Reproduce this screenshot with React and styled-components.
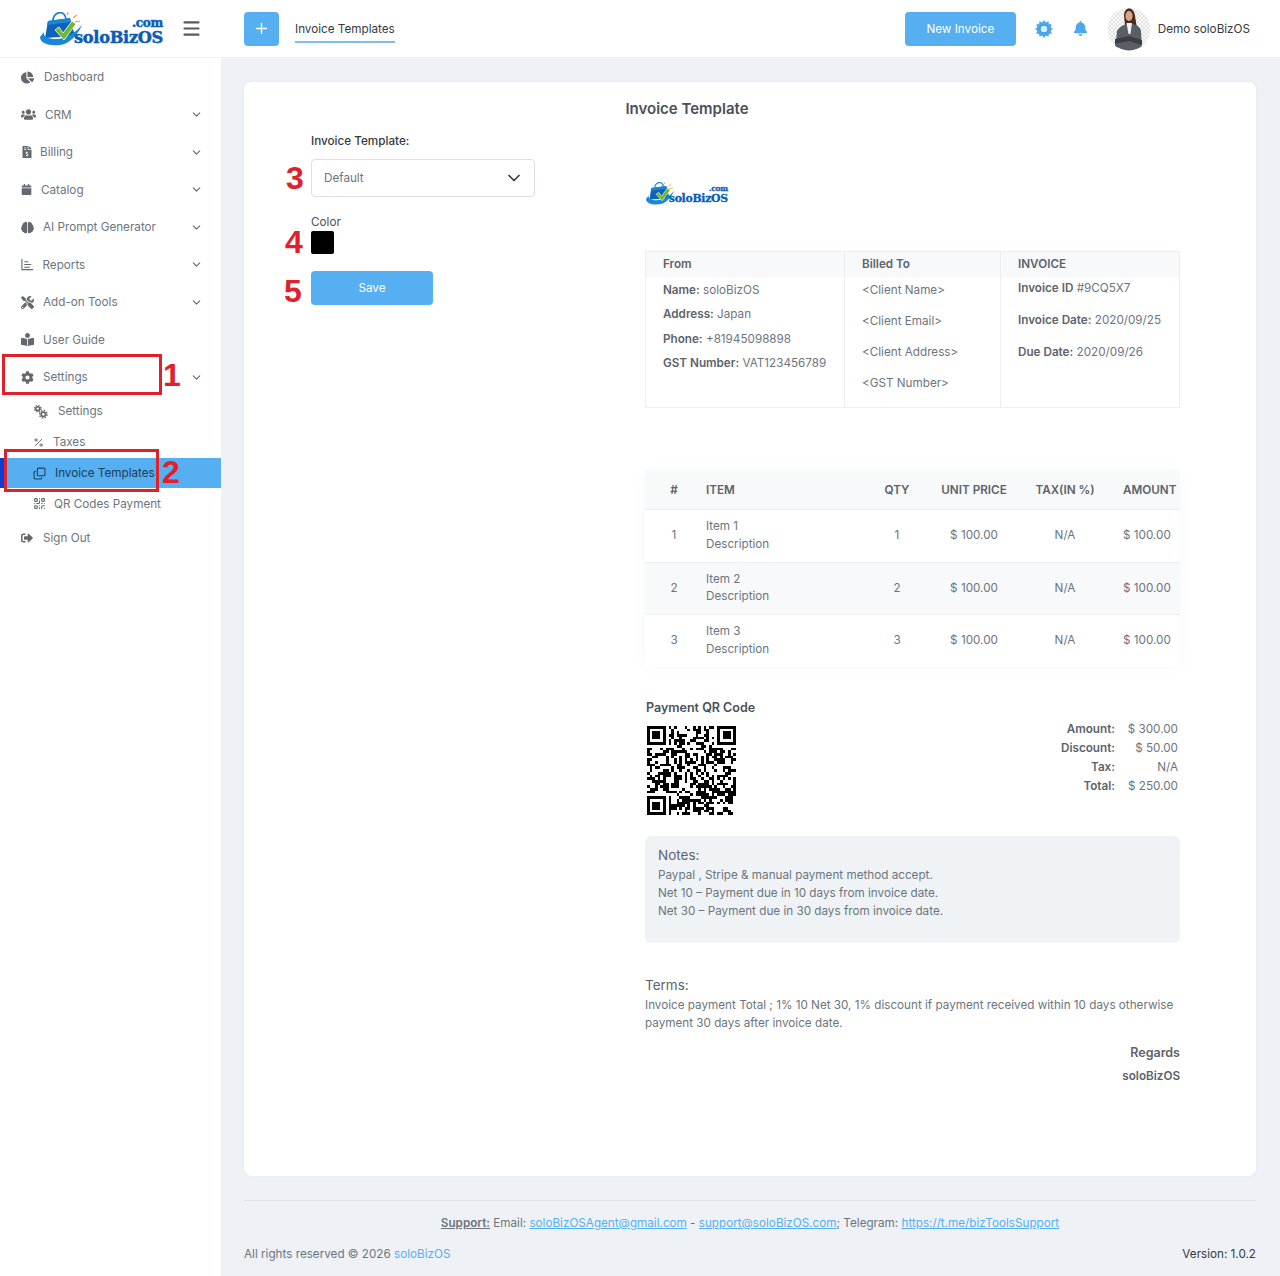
import styled, { createGlobalStyle } from "styled-components";
import { ChevronDown, Menu, Plus } from "lucide-react";
import {
  FaBell, FaBookReader, FaBrain, FaCalendar, FaChartPie, FaCog, FaFileInvoiceDollar,
  FaSignOutAlt, FaTools, FaUsers,
} from "react-icons/fa";
import { LuCopy, LuPercent, LuQrCode } from "react-icons/lu";

const GlobalStyle = createGlobalStyle`
  html, body { margin: 0; padding: 0; }
  body {
    background: #eef2f6;
    font-family: Inter, "Noto Sans", "Liberation Sans", sans-serif;
    font-size: 11.7px;
    color: #6c757d;
  }
  * { box-sizing: border-box; }
`;

const Page = styled.div`
  position: relative;
  width: 1280px;
  height: 1276px;
  overflow: hidden;
  display: grid;
  grid-template-columns: 221px 1fr;
  grid-template-rows: 58px 1fr;
`;

/* ---------- header ---------- */
const Brand = styled.div`
  background: #fff;
  display: flex;
  align-items: center;
  padding-left: 40px;
  border-bottom: 1px solid #eef0f3;
`;

const LogoWrap = styled.div`
  display: flex;
  align-items: center;
  flex-shrink: 0;
`;

const LogoText = styled.div`
  display: flex;
  flex-direction: column;
  align-items: flex-end;
  font-family: "DejaVu Serif", "Liberation Serif", serif;
  font-weight: 700;
  color: #0c5cb4;
  -webkit-text-stroke: ${(p) => (p.$small ? "0.3px" : "0.5px")} #0c5cb4;
  font-size: ${(p) => (p.$small ? "10.9px" : "16.2px")};
  line-height: ${(p) => (p.$small ? "11px" : "15px")};
  letter-spacing: -0.3px;
  margin-left: ${(p) => (p.$small ? "-9.5px" : "-14px")};
  padding-top: ${(p) => (p.$small ? "2px" : "5px")};
`;

const LogoCom = styled.span`
  font-size: ${(p) => (p.$small ? "7.5px" : "12px")};
  line-height: ${(p) => (p.$small ? "8px" : "13px")};
`;

const Burger = styled.span`
  display: inline-flex;
  color: #555b61;
  margin-left: 18px;
`;

const TopBar = styled.header`
  background: #fff;
  display: flex;
  align-items: center;
  padding: 0 30px 0 23px;
  border-bottom: 1px solid #eef0f3;
`;

const PlusButton = styled.button`
  width: 35px;
  height: 34px;
  border: 0;
  border-radius: 4px;
  background: #55aff0;
  color: #fff;
  display: flex;
  align-items: center;
  justify-content: center;
  padding: 0;
`;

const Tab = styled.div`
  margin-left: 16px;
  padding: 7px 0 4px;
  color: #343a40;
  border-bottom: 2px solid #7dbde8;
  line-height: 15px;
`;

const TopRight = styled.div`
  margin-left: auto;
  display: flex;
  align-items: center;
`;

const PrimaryButton = styled.button`
  width: ${(p) => p.$width}px;
  height: 34px;
  border: 0;
  border-radius: 4px;
  background: #55aff0;
  color: #fff;
  font: inherit;
  padding: 0;
`;

const TopIcon = styled.span`
  display: inline-flex;
  color: #4ba8ec;
  margin-left: ${(p) => p.$left}px;
`;

const AvatarImage = styled.svg`
  margin-left: 19px;
`;

const UserName = styled.span`
  margin-left: 7px;
  color: #343a40;
`;

/* ---------- sidebar ---------- */
const Sidebar = styled.nav`
  background: #fff;
  display: flex;
  flex-direction: column;
  padding-top: 0.6px;
`;

const NavRow = styled.div`
  height: 37.5px;
  flex-shrink: 0;
  display: flex;
  align-items: center;
  padding: 0 18px 0 21px;
  color: #6c757d;
`;

const SubRow = styled.div`
  height: 30.8px;
  flex-shrink: 0;
  display: flex;
  align-items: center;
  padding-left: ${(p) => (p.$active ? "29px" : "33px")};
  color: ${(p) => (p.$active ? "#1c3d5a" : "#6c757d")};
  background: ${(p) => (p.$active ? "#55aff0" : "transparent")};
  border-left: ${(p) => (p.$active ? "4px solid #0b3fd0" : "0")};
`;

const IconSlot = styled.span`
  width: ${(p) => p.$slot}px;
  flex-shrink: 0;
  display: inline-flex;
  align-items: center;
  color: ${(p) => (p.$active ? "#1c3d5a" : "#62686e")};
`;

const Chevron = styled(ChevronDown)`
  margin-left: auto;
  color: #62686e;
`;

const RotatedCopy = styled(LuCopy)`
  transform: rotate(-90deg);
`;

/* ---------- main ---------- */
const Main = styled.main`
  padding: 24px 24px 0 23px;
  display: flex;
  flex-direction: column;
`;

const Card = styled.section`
  height: 1094px;
  background: #fff;
  border-radius: 8px;
  padding-top: 17px;
  box-shadow: 0 0 4px rgba(90, 110, 130, 0.06);
`;

const CardTitle = styled.h1`
  margin: 1px 0 -1px;
  width: 886px;
  text-align: center;
  font-size: 15px;
  line-height: 18px;
  font-weight: 600;
  color: #495057;
`;

const CardBody = styled.div`
  display: flex;
  padding-left: 67px;
`;

const FormColumn = styled.div`
  width: 224px;
  padding-top: 15px;
  flex-shrink: 0;
`;

const FieldLabel = styled.div`
  line-height: 18px;
  color: ${(p) => (p.$strong ? "#343a40" : "#495057")};
  font-weight: ${(p) => (p.$strong ? 500 : 400)};
`;

const SelectBox = styled.div`
  height: 38px;
  margin-top: 9px;
  border: 1px solid #dcdfe3;
  border-radius: 4px;
  display: flex;
  align-items: center;
  justify-content: space-between;
  padding: 0 10px 0 12px;
  color: #6c757d;
`;

const ColorGroup = styled.div`
  margin-top: 16px;
`;

const Swatch = styled.div`
  width: 23px;
  height: 23px;
  border-radius: 2px;
  background: #000;
`;

const SaveRow = styled.div`
  margin-top: 17px;
`;

const Preview = styled.div`
  width: 535px;
  margin-left: 110px;
  padding-top: 65px;
  flex-shrink: 0;
`;

const PreviewLogo = styled.div`
  padding-left: 1px;
  height: 69px;
`;

const InfoTable = styled.div`
  height: 157px;
  display: grid;
  grid-template-columns: 198px 156px 179px;
  border: 1px solid #eceef1;
`;

const InfoCol = styled.div`
  border-left: ${(p) => (p.$first ? "0" : "1px solid #eceef1")};
`;

const InfoHead = styled.div`
  height: 25px;
  background: #f8f9fa;
  padding: 0 0 1px 17px;
  display: flex;
  align-items: center;
  font-weight: 600;
  color: #5c636a;
`;

const InfoLines = styled.div`
  padding: ${(p) => p.$top}px 0 0 17px;
  display: flex;
  flex-direction: column;
  gap: ${(p) => p.$gap}px;
`;

const InfoLine = styled.div`
  line-height: 15px;
  white-space: nowrap;
  b { font-weight: 600; color: #5c636a; }
`;

const ItemsTable = styled.div`
  margin-top: 63px;
  box-shadow: 0 0 12px rgba(120, 135, 150, 0.07);
  border-radius: 6px;
`;

const ItemRow = styled.div`
  display: grid;
  grid-template-columns: 58px 170px 48px 106px 76px 77px;
  align-items: center;
  height: ${(p) => (p.$head ? 38 : 52.5)}px;
  padding-top: ${(p) => (p.$head ? 1 : 0)}px;
  background: ${(p) => (p.$shade ? "#f8f9fa" : "#fff")};
  border-top: ${(p) => (p.$line ? "1px solid #eceef1" : "0")};
  font-weight: ${(p) => (p.$head ? 600 : 400)};
  color: ${(p) => (p.$head ? "#5c636a" : "#6c757d")};
`;

const Cell = styled.div`
  text-align: ${(p) => p.$align || "center"};
  padding-left: ${(p) => p.$pad || 0}px;
  line-height: 17.5px;
  white-space: nowrap;
`;

const QrRow = styled.div`
  margin-top: 33px;
  display: flex;
  justify-content: space-between;
  padding-left: 1px;
`;

const QrTitle = styled.div`
  font-size: 12.5px;
  font-weight: 600;
  color: #495057;
  line-height: 16px;
`;

const QrImage = styled.svg`
  display: block;
  margin: 10px 0 0 1px;
`;

const Totals = styled.div`
  padding: 20px 2px 0 0;
  display: grid;
  grid-template-columns: auto 63px;
  grid-auto-rows: 19px;
  align-items: center;
  text-align: right;
  font-weight: 400;
  b { font-weight: 600; color: #5c636a; }
`;

const Notes = styled.div`
  margin-top: 21px;
  height: 107px;
  background: #eff3f6;
  border-radius: 6px;
  padding: 10px 13px;
  line-height: 18px;
`;

const NoteTitle = styled.div`
  font-size: 13.5px;
  line-height: 18px;
  color: #5c636a;
  margin-bottom: 2px;
`;

const Terms = styled.div`
  margin-top: 33px;
  line-height: 18px;
`;

const Regards = styled.div`
  margin-top: ${(p) => p.$top}px;
  text-align: right;
  font-size: ${(p) => (p.$big ? "12.5px" : "inherit")};
  font-weight: 600;
  color: #5c636a;
  line-height: 16px;
`;

const Footer = styled.footer`
  margin-top: 24px;
  border-top: 1px solid #dfe3e8;
`;

const Support = styled.div`
  text-align: center;
  padding-top: 14px;
  line-height: 16px;
  b { font-weight: 600; text-decoration: underline; }
`;

const Link = styled.span`
  color: #55aff0;
  text-decoration: ${(p) => (p.$plain ? "none" : "underline")};
`;

const FooterBottom = styled.div`
  display: flex;
  justify-content: space-between;
  margin-top: 15px;
  line-height: 16px;
`;

const Version = styled.span`
  color: #343a40;
`;

/* ---------- red annotations over the screenshot ---------- */
const MarkBox = styled.div`
  position: absolute;
  left: ${(p) => p.$x}px;
  top: ${(p) => p.$y}px;
  width: ${(p) => p.$w}px;
  height: ${(p) => p.$h}px;
  border: 3px solid #e0202a;
`;

const MarkNum = styled.span`
  position: absolute;
  left: ${(p) => p.$x}px;
  top: ${(p) => p.$y}px;
  font-family: "Liberation Sans", Arial, sans-serif;
  font-size: 32px;
  line-height: 32px;
  font-weight: 700;
  color: #e0202a;
`;

const LogoIcon = ({ small }) => (
  <svg width={small ? 32.3 : 48} height={small ? 23 : 34} viewBox="0 0 48 34">
    <path d="M8 9 L30 6 L35 24 L5 26Z" fill="#0e62b8" />
    <path d="M8 9 L30 6 L31 10 L7 13Z" fill="#1a86d8" />
    <path d="M13 10 C12 -1 26 -3 26 8" fill="none" stroke="#1a86d8" strokeWidth="1.8" />
    <path d="M0 25 C0 31 8 34 20 33 C30 32 38 22 42 13 C36 20 26 27 16 27 C8 27 3 25 4 20 Z" fill="#1a86d8" />
    <path d="M15 18 L19 15 L23 21 L32 9 L36 12 L24 28Z" fill="#6cbb2d" stroke="#fff" strokeWidth="0.8" />
    <path d="M27 3 L28 0 M33 6 L37 3 M35 10 L40 9" stroke="#f0a030" strokeWidth="1.2" />
  </svg>
);

const Logo = ({ small }) => (
  <LogoWrap>
    <LogoIcon small={small} />
    <LogoText $small={small}>
      <LogoCom $small={small}>.com</LogoCom>
      <span>soloBizOS</span>
    </LogoText>
  </LogoWrap>
);

const GearIcon = () => (
  <svg width="18" height="18" viewBox="0 0 18 18">
    <path
      fill="#4ba8ec"
      d="M9 0 L10.8 2.4 L13.5 1.2 L13.9 4.1 L16.8 4.5 L15.6 7.2 L18 9 L15.6 10.8 L16.8 13.5 L13.9 13.9 L13.5 16.8 L10.8 15.6 L9 18 L7.2 15.6 L4.5 16.8 L4.1 13.9 L1.2 13.5 L2.4 10.8 L0 9 L2.4 7.2 L1.2 4.5 L4.1 4.1 L4.5 1.2 L7.2 2.4Z"
    />
    <circle cx="9" cy="9" r="4" fill="#d8ecfb" stroke="#3f9be0" strokeWidth="1.4" />
  </svg>
);

const Avatar = () => (
  <AvatarImage width="44" height="44" viewBox="0 0 44 44">
    <defs>
      <pattern id="chk" width="4" height="4" patternUnits="userSpaceOnUse">
        <rect width="4" height="4" fill="#fafafa" />
        <rect width="2" height="2" fill="#e2e2e2" />
        <rect x="2" y="2" width="2" height="2" fill="#e2e2e2" />
      </pattern>
      <clipPath id="round"><circle cx="22" cy="22" r="21.5" /></clipPath>
    </defs>
    <g clipPath="url(#round)">
      <rect width="44" height="44" fill="url(#chk)" />
      <path d="M17 9 C17 -1 27 -1 28 9 L30 21 L26 24 L18 18Z" fill="#4a2c1e" />
      <ellipse cx="22" cy="9" rx="3.6" ry="5" fill="#d9a68a" />
      <path d="M8 44 L10 24 C13 19 17 18 20 17 L26 17 C30 18 33 20 34 24 L35 44Z" fill="#5a5e65" />
      <path d="M19.5 16 L25 16 L23.5 27 L21.5 27Z" fill="#f2f2f2" />
      <path d="M8 32 L22 29 L35 33 L35 38 L22 34 L8 37Z" fill="#3b3f45" />
      <path d="M8 37 L14 44 L8 44Z" fill="#2a2c30" />
    </g>
  </AvatarImage>
);

const ReportsIcon = ({ size }) => (
  <svg width={size} height={size} viewBox="0 0 14 14" fill="none" stroke="currentColor" strokeWidth="1.2">
    <path d="M1 1 V12.5 H13" />
    <path d="M3.5 4 H8 M3.5 7 H11 M3.5 10 H9.5" />
  </svg>
);

const TwoGearsIcon = ({ size }) => (
  <svg width={size} height={size} viewBox="0 0 16 16" fill="none" stroke="currentColor">
    <circle cx="5" cy="5" r="2" strokeWidth="1.6" />
    <circle cx="5" cy="5" r="3.4" strokeWidth="1.4" strokeDasharray="1.5 1.2" />
    <circle cx="11" cy="11" r="2.3" strokeWidth="1.8" />
    <circle cx="11" cy="11" r="4" strokeWidth="1.5" strokeDasharray="1.7 1.4" />
  </svg>
);

const navTop = [
  { label: "Dashboard", Icon: FaChartPie, size: 13, slot: 23 },
  { label: "CRM", Icon: FaUsers, size: 15, slot: 24, more: true },
  { label: "Billing", Icon: FaFileInvoiceDollar, size: 12, slot: 19, more: true },
  { label: "Catalog", Icon: FaCalendar, size: 11, slot: 20, more: true },
  { label: "AI Prompt Generator", Icon: FaBrain, size: 13, slot: 22, more: true },
  { label: "Reports", Icon: ReportsIcon, size: 13, slot: 21.5, more: true },
  { label: "Add-on Tools", Icon: FaTools, size: 13, slot: 22, more: true },
  { label: "User Guide", Icon: FaBookReader, size: 13, slot: 22 },
  { label: "Settings", Icon: FaCog, size: 13, slot: 22, more: true },
];

const navSub = [
  { label: "Settings", Icon: TwoGearsIcon, size: 15, slot: 25 },
  { label: "Taxes", Icon: LuPercent, size: 11, slot: 20 },
  { label: "Invoice Templates", Icon: RotatedCopy, size: 13, slot: 22, active: true },
  { label: "QR Codes Payment", Icon: LuQrCode, size: 13, slot: 21 },
];

const items = [
  { n: 1, name: "Item 1" },
  { n: 2, name: "Item 2" },
  { n: 3, name: "Item 3" },
];

// fake but stable qr pattern
const QR_SIZE = 33;
const qrCells = () => {
  const cells = [];
  let seed = 73291;
  const inFinder = (x, y) =>
    (x < 8 && y < 8) || (x > QR_SIZE - 9 && y < 8) || (x < 8 && y > QR_SIZE - 9);
  for (let y = 0; y < QR_SIZE; y++) {
    for (let x = 0; x < QR_SIZE; x++) {
      seed = (seed * 1103515245 + 12345) & 0x7fffffff;
      if (!inFinder(x, y) && (seed >> 16) % 100 < 50) cells.push([x, y]);
    }
  }
  return cells;
};

const Finder = ({ x, y }) => (
  <>
    <rect x={x + 0.5} y={y + 0.5} width="6" height="6" fill="none" stroke="#000" />
    <rect x={x + 2} y={y + 2} width="3" height="3" fill="#000" />
  </>
);

const QrCode = () => (
  <QrImage width="89" height="89" viewBox={`0 0 ${QR_SIZE} ${QR_SIZE}`} shapeRendering="crispEdges">
    {qrCells().map(([x, y]) => (
      <rect key={`${x}-${y}`} x={x} y={y} width="1" height="1" fill="#000" />
    ))}
    <Finder x={0} y={0} />
    <Finder x={QR_SIZE - 7} y={0} />
    <Finder x={0} y={QR_SIZE - 7} />
  </QrImage>
);

const NavItem = ({ item }) => (
  <NavRow>
    <IconSlot $slot={item.slot}><item.Icon size={item.size} /></IconSlot>
    {item.label}
    {item.more && <Chevron size={13} />}
  </NavRow>
);

const SubItem = ({ item }) => (
  <SubRow $active={item.active}>
    <IconSlot $slot={item.slot} $active={item.active}><item.Icon size={item.size} /></IconSlot>
    {item.label}
  </SubRow>
);

export default function App() {
  return (
    <Page>
      <GlobalStyle />
      <Brand>
        <Logo />
        <Burger><Menu size={21} strokeWidth={2.5} /></Burger>
      </Brand>
      <TopBar>
        <PlusButton><Plus size={17} /></PlusButton>
        <Tab>Invoice Templates</Tab>
        <TopRight>
          <PrimaryButton $width={111}>New Invoice</PrimaryButton>
          <TopIcon $left={19}><GearIcon /></TopIcon>
          <TopIcon $left={20}><FaBell size={15} /></TopIcon>
          <Avatar />
          <UserName>Demo soloBizOS</UserName>
        </TopRight>
      </TopBar>

      <Sidebar>
        {navTop.map((item) => <NavItem key={item.label} item={item} />)}
        {navSub.map((item) => <SubItem key={item.label} item={item} />)}
        <NavItem item={{ label: "Sign Out", Icon: FaSignOutAlt, size: 12, slot: 22 }} />
      </Sidebar>

      <Main>
        <Card>
          <CardTitle>Invoice Template</CardTitle>
          <CardBody>
            <FormColumn>
              <FieldLabel $strong>Invoice Template:</FieldLabel>
              <SelectBox>
                Default
                <ChevronDown size={20} color="#343a40" />
              </SelectBox>
              <ColorGroup>
                <FieldLabel>Color</FieldLabel>
                <Swatch />
              </ColorGroup>
              <SaveRow><PrimaryButton $width={122}>Save</PrimaryButton></SaveRow>
            </FormColumn>

            <Preview>
              <PreviewLogo><Logo small /></PreviewLogo>
              <InfoTable>
                <InfoCol $first>
                  <InfoHead>From</InfoHead>
                  <InfoLines $top={6} $gap={9.3}>
                    <InfoLine><b>Name:</b> soloBizOS</InfoLine>
                    <InfoLine><b>Address:</b> Japan</InfoLine>
                    <InfoLine><b>Phone:</b> +81945098898</InfoLine>
                    <InfoLine><b>GST Number:</b> VAT123456789</InfoLine>
                  </InfoLines>
                </InfoCol>
                <InfoCol>
                  <InfoHead>Billed To</InfoHead>
                  <InfoLines $top={6} $gap={16}>
                    <InfoLine>&lt;Client Name&gt;</InfoLine>
                    <InfoLine>&lt;Client Email&gt;</InfoLine>
                    <InfoLine>&lt;Client Address&gt;</InfoLine>
                    <InfoLine>&lt;GST Number&gt;</InfoLine>
                  </InfoLines>
                </InfoCol>
                <InfoCol>
                  <InfoHead>INVOICE</InfoHead>
                  <InfoLines $top={4} $gap={17}>
                    <InfoLine><b>Invoice ID</b> #9CQ5X7</InfoLine>
                    <InfoLine><b>Invoice Date:</b> 2020/09/25</InfoLine>
                    <InfoLine><b>Due Date:</b> 2020/09/26</InfoLine>
                  </InfoLines>
                </InfoCol>
              </InfoTable>

              <ItemsTable>
                <ItemRow $head $shade>
                  <Cell>#</Cell>
                  <Cell $align="left" $pad={3}>ITEM</Cell>
                  <Cell>QTY</Cell>
                  <Cell>UNIT PRICE</Cell>
                  <Cell>TAX(IN %)</Cell>
                  <Cell $align="left" $pad={20}>AMOUNT</Cell>
                </ItemRow>
                {items.map((it) => (
                  <ItemRow key={it.n} $line $shade={it.n === 2}>
                    <Cell>{it.n}</Cell>
                    <Cell $align="left" $pad={3}>{it.name}<br />Description</Cell>
                    <Cell>{it.n}</Cell>
                    <Cell>$ 100.00</Cell>
                    <Cell>N/A</Cell>
                    <Cell $align="left" $pad={20}>$ 100.00</Cell>
                  </ItemRow>
                ))}
              </ItemsTable>

              <QrRow>
                <div>
                  <QrTitle>Payment QR Code</QrTitle>
                  <QrCode />
                </div>
                <Totals>
                  <b>Amount:</b><span>$ 300.00</span>
                  <b>Discount:</b><span>$ 50.00</span>
                  <b>Tax:</b><span>N/A</span>
                  <b>Total:</b><span>$ 250.00</span>
                </Totals>
              </QrRow>

              <Notes>
                <NoteTitle>Notes:</NoteTitle>
                Paypal , Stripe &amp; manual payment method accept.<br />
                Net 10 – Payment due in 10 days from invoice date.<br />
                Net 30 – Payment due in 30 days from invoice date.
              </Notes>

              <Terms>
                <NoteTitle>Terms:</NoteTitle>
                Invoice payment Total ; 1% 10 Net 30, 1% discount if payment received within 10 days otherwise payment 30 days after invoice date.
              </Terms>

              <Regards $big $top={13}>Regards</Regards>
              <Regards $top={7}>soloBizOS</Regards>
            </Preview>
          </CardBody>
        </Card>

        <Footer>
          <Support>
            <b>Support:</b> Email: <Link>soloBizOSAgent@gmail.com</Link> - <Link>support@soloBizOS.com</Link>; Telegram: <Link>https://t.me/bizToolsSupport</Link>
          </Support>
          <FooterBottom>
            <span>All rights reserved © 2026 <Link $plain>soloBizOS</Link></span>
            <Version>Version: 1.0.2</Version>
          </FooterBottom>
        </Footer>
      </Main>

      <MarkBox $x={2} $y={354} $w={160} $h={41} />
      <MarkBox $x={4} $y={449} $w={155} $h={43} />
      <MarkNum $x={163} $y={359}>1</MarkNum>
      <MarkNum $x={162} $y={456}>2</MarkNum>
      <MarkNum $x={286} $y={162}>3</MarkNum>
      <MarkNum $x={285} $y={226}>4</MarkNum>
      <MarkNum $x={284} $y={275}>5</MarkNum>
    </Page>
  );
}
